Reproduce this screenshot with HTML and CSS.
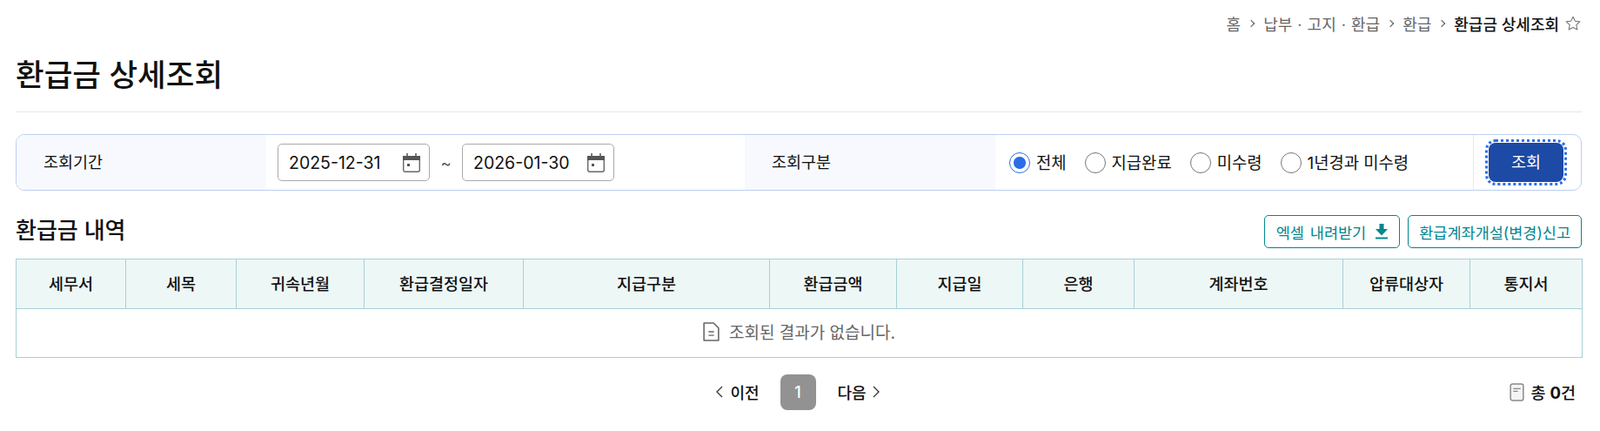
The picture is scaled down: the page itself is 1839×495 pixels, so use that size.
FILE: index.html
```html
<!DOCTYPE html>
<html lang="ko">

<head>
    <meta charset="UTF-8">
    <title>환급금 상세조회</title>
    <link rel="stylesheet" href="styles.css">
</head>

<body>
    <div class="page">
        <div class="crumbs">
            <span>홈</span><i class="sep"></i>
            <span class="wide">납부 · 고지 · 환급</span><i class="sep"></i>
            <span>환급</span><i class="sep"></i>
            <strong>환급금 상세조회</strong>
            <svg class="star" width="20" height="20" viewBox="0 0 20 20"><path d="M10 2.200l2.400 5 5.400.7-4 3.800 1 5.400-4.800-2.600-4.800 2.600 1-5.400-4-3.800 5.400-.7z" fill="none" stroke="#777" stroke-width="1.100" stroke-linejoin="round"/></svg>
        </div>

        <h1 class="title">환급금 상세조회</h1>

        <div class="search">
            <div class="label label_date">조회기간</div>
            <div class="dates">
                <div class="date">2025-12-31
                    <svg width="20" height="22" viewBox="0 0 20 22"><path d="M5 0v4M15 0v4" stroke="#555" stroke-width="1.500"/><rect x=".7" y="3.700" width="18.600" height="17.600" rx="2" fill="#fff" stroke="#666" stroke-width="1.400"/><rect x="0" y="3" width="20" height="5" fill="#555"/><rect x="5" y="12" width="3" height="3" fill="#555"/></svg>
                </div>
                <span class="tilde">~</span>
                <div class="date">2026-01-30
                    <svg width="20" height="22" viewBox="0 0 20 22"><path d="M5 0v4M15 0v4" stroke="#555" stroke-width="1.500"/><rect x=".7" y="3.700" width="18.600" height="17.600" rx="2" fill="#fff" stroke="#666" stroke-width="1.400"/><rect x="0" y="3" width="20" height="5" fill="#555"/><rect x="5" y="12" width="3" height="3" fill="#555"/></svg>
                </div>
            </div>
            <div class="label label_type">조회구분</div>
            <div class="radios">
                <label class="radio"><i class="dot on"></i><span>전체</span></label>
                <label class="radio"><i class="dot"></i><span>지급완료</span></label>
                <label class="radio"><i class="dot"></i><span>미수령</span></label>
                <label class="radio"><i class="dot"></i><span>1년경과 미수령</span></label>
            </div>
            <div class="search_btn"><button class="btn_go">조회</button></div>
        </div>

        <div class="list_head">
            <h2>환급금 내역</h2>
            <div class="list_btns">
                <a class="btn_line btn_excel" href="#">엑셀 내려받기
                    <svg width="14" height="18" viewBox="0 0 14 18"><path d="M4.500 0h5v6H14l-7 7.500L0 6h4.500z" fill="#00868f"/><rect x="0" y="15.500" width="14" height="2" fill="#00868f"/></svg>
                </a>
                <a class="btn_line" href="#">환급계좌개설(변경)신고</a>
            </div>
        </div>

        <table class="list">
            <colgroup>
                <col class="c1"><col class="c2"><col class="c3"><col class="c4"><col class="c5"><col class="c6">
                <col class="c7"><col class="c8"><col class="c9"><col class="c10"><col class="c11">
            </colgroup>
            <thead>
                <tr>
                    <th>세무서</th><th>세목</th><th>귀속년월</th><th>환급결정일자</th><th>지급구분</th><th>환급금액</th>
                    <th>지급일</th><th>은행</th><th>계좌번호</th><th>압류대상자</th><th>통지서</th>
                </tr>
            </thead>
            <tbody>
                <tr>
                    <td colspan="11">
                        <span class="empty">
                            <svg width="19" height="22" viewBox="0 0 18 21"><path d="M1 1h10.500L17 6.500V20H1z" fill="none" stroke="#666" stroke-width="1.500" stroke-linejoin="round"/><path d="M6 10.500h6M6 14.500h6" stroke="#666" stroke-width="1.300"/></svg>
                            조회된 결과가 없습니다.
                        </span>
                    </td>
                </tr>
            </tbody>
        </table>

        <div class="foot">
            <div class="pager">
                <a class="prev" href="#"><svg width="10" height="14" viewBox="0 0 10 14"><path d="M8 1L2 7l6 6" fill="none" stroke="#333" stroke-width="1.300"/></svg>이전</a>
                <span class="num">1</span>
                <a href="#">다음<svg width="10" height="14" viewBox="0 0 10 14"><path d="M2 1l6 6-6 6" fill="none" stroke="#333" stroke-width="1.300"/></svg></a>
            </div>
            <div class="total">
                <svg width="17" height="21" viewBox="0 0 16 20"><rect x="1" y="1" width="14" height="18" rx="2" fill="#f4f4f4" stroke="#888" stroke-width="1.400"/><path d="M4 6h8M4 9h5" stroke="#888" stroke-width="1.200"/></svg>
                <span>총 <b>0</b>건</span>
            </div>
        </div>
    </div>
</body>

</html>
```

FILE: styles.css
```css
* {
    margin: 0;
    padding: 0;
    box-sizing: border-box;
}

a {
    text-decoration: none;
    color: inherit;
}

body {
    background-color: #fff;
    color: #111;
    font-family: Inter, "Noto Sans CJK KR", sans-serif;
    font-size: 18.500px;
}

.page {
    width: 1800px;
    margin-left: 18px;
}

/* 상단 경로 */
.crumbs {
    display: flex;
    justify-content: flex-end;
    align-items: center;
    gap: 11px;
    height: 24px;
    margin-top: 15px;
    color: #666;
    font-size: 18px;
}

.crumbs .wide {
    word-spacing: 1px;
}

.crumbs strong {
    color: #111;
    font-weight: 500;
}

.crumbs .sep {
    width: 6px;
    height: 6px;
    margin-left: -2px;
    border-top: 1.500px solid #555;
    border-right: 1.500px solid #555;
    transform: rotate(45deg);
}

.crumbs .star {
    margin-left: -5px;
}

.title {
    height: 90px;
    padding-top: 22px;
    border-bottom: 1px solid #e3e6ec;
    font-size: 35.500px;
    font-weight: 500;
    line-height: 52px;
}

/* 검색 영역 */
.search {
    display: flex;
    align-items: stretch;
    height: 65px;
    margin-top: 25px;
    border: 1px solid #bcd0f0;
    border-radius: 10px;
    overflow: hidden;
}

.label {
    display: flex;
    align-items: center;
    padding: 0 0 3px 31px;
    background-color: #f7f9fe;
}

.label_date {
    width: 287px;
}

.label_type {
    width: 288px;
}

.dates {
    display: flex;
    align-items: center;
    width: 550px;
    padding-left: 13px;
}

.date {
    display: flex;
    justify-content: space-between;
    align-items: center;
    width: 175px;
    height: 43px;
    padding: 0 10px 0 12px;
    border: 1px solid #aaa;
    border-radius: 5px;
    font-size: 19.500px;
}

.date svg {
    margin-top: 1px;
}

.tilde {
    width: 37px;
    color: #555;
    text-align: center;
}

.radios {
    display: flex;
    align-items: center;
    gap: 21px;
    width: 549px;
    padding-left: 16px;
    font-size: 18.800px;
}

.radio {
    display: flex;
    align-items: center;
    gap: 7px;
}

.radio span {
    margin-bottom: 2px;
}

.dot {
    width: 24px;
    height: 24px;
    border: 1px solid #777;
    border-radius: 50%;
    background-color: #fff;
}

.dot.on {
    border-color: #2b6de8;
    background: radial-gradient(circle, #2b6de8 0 6.500px, #fff 7.500px);
}

.search_btn {
    display: flex;
    flex: 1;
    justify-content: center;
    align-items: center;
    border-left: 1px solid #e3e9f4;
}

.btn_go {
    width: 86px;
    height: 45px;
    margin-right: 3px;
    padding-bottom: 3px;
    border: 0;
    border-radius: 8px;
    outline: 3px dotted #2b6de8;
    outline-offset: 1px;
    background-color: #1c4aa4;
    color: #fff;
    font-family: inherit;
    font-size: 18.500px;
}

/* 목록 */
.list_head {
    display: flex;
    justify-content: space-between;
    align-items: center;
    height: 38px;
    margin-top: 28px;
}

.list_head h2 {
    margin-top: -7px;
    font-size: 26px;
    font-weight: 500;
}

.list_btns {
    display: flex;
    gap: 9px;
}

.btn_line {
    display: flex;
    align-items: center;
    gap: 10px;
    height: 38px;
    padding: 0 12px;
    border: 1px solid #00868f;
    border-radius: 5px;
    color: #00868f;
    font-size: 17.500px;
}

.btn_excel {
    gap: 11px;
    padding: 0 13px;
    word-spacing: 2px;
}

.list {
    width: 100%;
    margin-top: 12px;
    border: 1px solid #a9d0d8;
    border-collapse: collapse;
    table-layout: fixed;
}

.list th {
    height: 57px;
    padding-bottom: 2px;
    border: 1px solid #a9d0d8;
    background-color: #edf7f6;
    font-weight: 500;
}

.list td {
    height: 56px;
    padding-bottom: 2px;
    color: #666;
    text-align: center;
}

.empty {
    display: inline-flex;
    align-items: center;
    gap: 11px;
    font-size: 19px;
}

.c1 { width: 126px; }
.c2 { width: 127px; }
.c3 { width: 147px; }
.c4 { width: 183px; }
.c5 { width: 283px; }
.c6 { width: 146px; }
.c7 { width: 145px; }
.c8 { width: 128px; }
.c9 { width: 240px; }
.c10 { width: 146px; }
.c11 { width: 129px; }

/* 페이지 */
.foot {
    position: relative;
    display: flex;
    justify-content: center;
    align-items: center;
    height: 42px;
    margin-top: 18px;
}

.pager {
    display: flex;
    align-items: center;
    gap: 24px;
    margin-right: 2px;
    font-size: 18px;
    font-weight: 500;
}

.pager a {
    display: flex;
    align-items: center;
    gap: 6px;
}

.pager .prev {
    gap: 7px;
}

.num {
    width: 41px;
    height: 41px;
    margin-right: 1px;
    border-radius: 8px;
    background-color: #929292;
    color: #fff;
    line-height: 41px;
    text-align: center;
}

.total {
    position: absolute;
    right: 7px;
    display: flex;
    align-items: center;
    gap: 8px;
    font-size: 18.500px;
    font-weight: 500;
}
```
